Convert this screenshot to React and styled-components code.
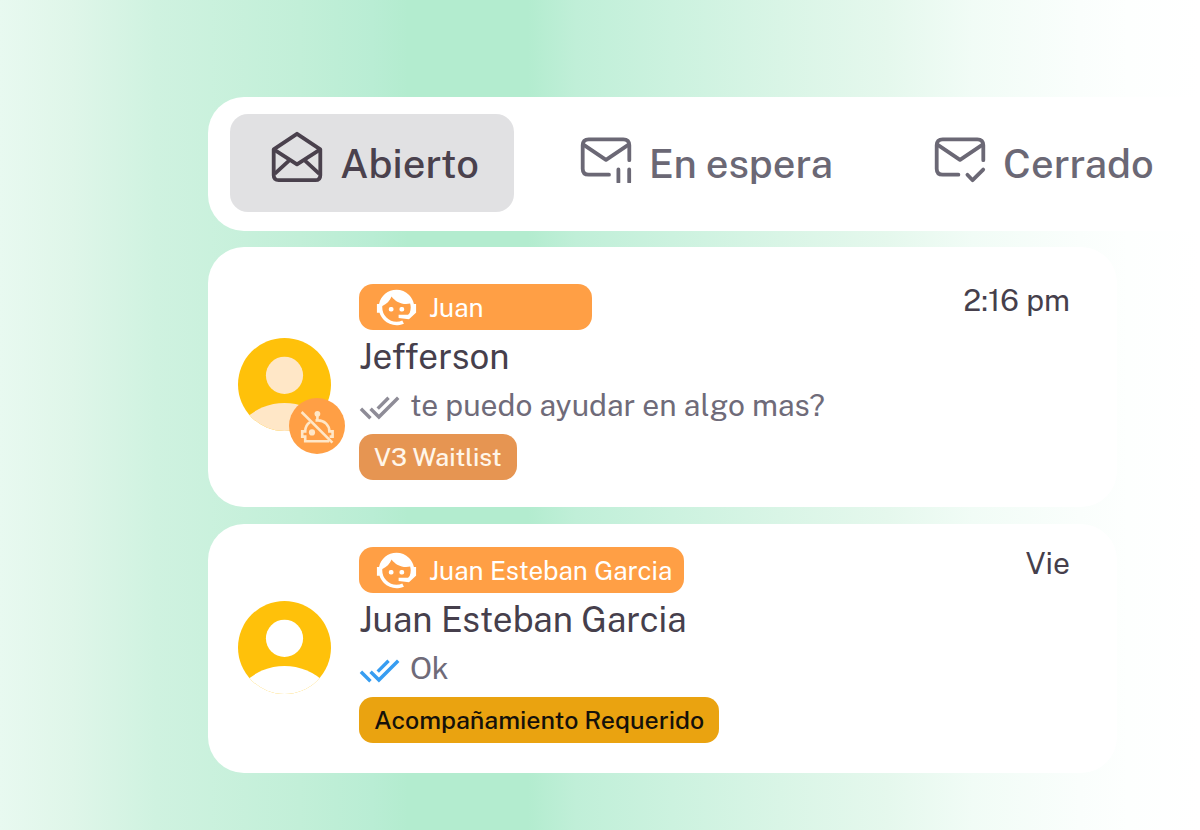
import React from "react";
import styled, { createGlobalStyle } from "styled-components";
import { MdDoneAll } from "react-icons/md";

const GlobalStyle = createGlobalStyle`
  * {
    box-sizing: border-box;
  }
  body {
    margin: 0;
    font-family: "Public Sans", Inter, "Liberation Sans", sans-serif;
    color: #463f4c;
  }
`;

const Page = styled.div`
  min-height: 100vh;
  padding: 97px 83px 56px 208px;
  overflow: hidden;
  background: linear-gradient(
    90deg,
    #e8f9f0 0%,
    #dff6e9 6%,
    #cff2e0 13%,
    #c2efd8 25%,
    #b9edd4 31%,
    #b3eccf 34%,
    #b3eccf 44%,
    #c0efd8 48%,
    #ccf2df 56%,
    #d9f5e6 65%,
    #e5f8ed 74%,
    #f1fcf6 81%,
    #fafefc 90%,
    #fdfffe 94%,
    #ffffff 100%
  );
`;

const TabBar = styled.nav`
  display: flex;
  gap: 25px;
  margin-right: -83px;
  margin-bottom: 16px;
  padding: 17px 22px 19px;
  border-radius: 36px 0 0 36px;
  background: #fff;
`;

const Tab = styled.button`
  display: flex;
  flex-shrink: 0;
  align-items: center;
  gap: 17px;
  height: 98px;
  padding: 0 35px 0 41px;
  border: 0;
  border-radius: 18px;
  background: ${(props) => (props.$active ? "#e1e1e3" : "transparent")};
  color: ${(props) => (props.$active ? "#4a414d" : "#6b6875")};
  font-family: inherit;
  font-size: 40px;
  font-weight: 500;
  white-space: nowrap;
  cursor: pointer;
  svg {
    margin-bottom: 12px;
  }
`;

const List = styled.main`
  display: flex;
  flex-direction: column;
  gap: 17px;
`;

const Card = styled.article`
  display: flex;
  align-items: center;
  gap: 28px;
  padding: ${(props) => (props.$tall ? "37px 47px 27px 30px" : "23px 47px 30px 30px")};
  border-radius: 36px;
  background: #fff;
`;

const AvatarBox = styled.div`
  position: relative;
  flex-shrink: 0;
  width: 93px;
  height: 93px;
  margin-top: 4px;
`;

const Badge = styled.span`
  position: absolute;
  top: 60px;
  left: 51px;
  width: 56px;
  height: 56px;
  border-radius: 50%;
  background: #ff9f45;
`;

const Content = styled.div`
  flex: 1;
  display: flex;
  flex-direction: column;
  align-items: flex-start;
`;

const Agent = styled.div`
  display: flex;
  align-items: center;
  gap: 9px;
  min-width: 233px;
  height: 46px;
  padding: 0 12px 0 14px;
  border-radius: 14px;
  background: #ff9f45;
  color: #fff;
  font-size: 26px;
`;

const Name = styled.h2`
  margin: 0;
  font-size: 35px;
  font-weight: 400;
  line-height: 53px;
`;

const Message = styled.p`
  display: flex;
  align-items: center;
  gap: 10px;
  margin: 0;
  padding-bottom: 6px;
  color: #6f6b79;
  font-size: 30px;
  line-height: 45px;
  svg {
    margin-top: 4px;
    color: ${(props) => (props.$read ? "#379df1" : "#8e8c97")};
  }
`;

const Tag = styled.span`
  height: 46px;
  padding: 0 15px;
  border-radius: 14px;
  background: ${(props) => props.$bg};
  color: ${(props) => props.$color};
  font-size: 25px;
  font-weight: 500;
  line-height: 46px;
`;

const Time = styled.time`
  align-self: flex-start;
  font-size: 30px;
  line-height: 32px;
`;

const OpenMailIcon = () => (
  <svg
    width="52"
    height="52"
    viewBox="0 0 52 52"
    fill="none"
    stroke="currentColor"
    strokeWidth="3.8"
    strokeLinejoin="round"
    aria-hidden="true"
  >
    <path d="M2.7 18.3L26 2.8L49.3 18.3V44.2Q49.3 49.2 44.3 49.2H7.7Q2.7 49.2 2.7 44.2Z" />
    <path d="M2.7 18.3L26 33.4L49.3 18.3M3.6 42.8L18.3 29.4M48.4 42.8L33.7 29.4" />
  </svg>
);

const MailIcon = ({ end, children }) => (
  <svg
    width="52"
    height="52"
    viewBox="0 0 52 52"
    fill="none"
    stroke="currentColor"
    strokeWidth="3.8"
    strokeLinecap="round"
    strokeLinejoin="round"
    aria-hidden="true"
  >
    <path
      d={`M49.3 29.2V14.3Q49.3 8.3 43.3 8.3H8.7Q2.7 8.3 2.7 14.3V37.7Q2.7 43.7 8.7 43.7H${end}`}
    />
    <path d="M3.4 13.6L26 28.8L48.6 13.6" />
    {children}
  </svg>
);

const AgentIcon = () => (
  <svg width="47" height="47" viewBox="0 0 24 24" fill="currentColor" aria-hidden="true">
    <path d="M18.72 14.76C19.07 13.91 19.26 13 19.26 12C19.26 11.28 19.15 10.59 18.96 9.95C18.31 10.1 17.63 10.18 16.92 10.18C13.86 10.18 11.15 8.67 9.5 6.34C8.61 8.5 6.91 10.26 4.77 11.22C4.73 11.47 4.73 11.74 4.73 12A7.27 7.27 0 0 0 12 19.27C13.05 19.27 14.06 19.04 14.97 18.63C15.54 19.72 15.8 20.26 15.78 20.26C14.14 20.81 12.87 21.08 12 21.08C9.58 21.08 7.27 20.13 5.57 18.42C4.53 17.38 3.76 16.11 3.33 14.73H2V10.18H3.09C3.93 6.04 7.6 2.92 12 2.92C14.4 2.92 16.71 3.87 18.42 5.58C19.69 6.84 20.54 8.45 20.89 10.18H22V14.73H21.94L18.38 18L13.08 17.4V15.73H17.91L18.72 14.76M9.27 11.77A1.14 1.14 0 1 1 9.27 14.04A1.14 1.14 0 1 1 9.27 11.77M14.72 11.77A1.14 1.14 0 1 1 14.72 14.04A1.14 1.14 0 1 1 14.72 11.77Z" />
  </svg>
);

const BotOffIcon = () => (
  <svg
    width="56"
    height="56"
    viewBox="0 0 56 56"
    fill="none"
    stroke="#ffe7c7"
    strokeWidth="2.6"
    aria-hidden="true"
  >
    <circle cx="28.4" cy="15.8" r="2.9" fill="#ffe7c7" stroke="none" />
    <path d="M28.4 16V22.4M26.5 22.4H29C35.5 22.4 40.4 27.3 40.4 33.4H43.6V38.6H40.6" />
    <path d="M21 24.2C18 26.2 16.2 29.4 16.2 33.4H13.2V38.6H16.2V43.2H40.2" />
    <circle cx="23" cy="34.4" r="3.1" fill="#ffe7c7" stroke="none" />
    <path d="M12.6 14L43.4 44.6" />
  </svg>
);

const Avatar = ({ color, botOff }) => (
  <AvatarBox>
    <svg width="93" height="93" viewBox="0 0 93 93" aria-hidden="true">
      <clipPath id={`clip-${botOff ? "off" : "on"}`}>
        <circle cx="46.5" cy="46.5" r="46.5" />
      </clipPath>
      <g clipPath={`url(#clip-${botOff ? "off" : "on"})`}>
        <rect width="93" height="93" fill="#ffc10a" />
        <circle cx="46.5" cy="37.3" r="18.6" fill={color} />
        <circle cx="46.5" cy="122" r="57" fill={color} />
      </g>
    </svg>
    {botOff && (
      <Badge>
        <BotOffIcon />
      </Badge>
    )}
  </AvatarBox>
);

const chats = [
  {
    agent: "Juan",
    name: "Jefferson",
    message: "te puedo ayudar en algo mas?",
    tag: "V3 Waitlist",
    tagBg: "#e69552",
    tagColor: "#fff6e9",
    time: "2:16 pm",
    avatar: "#ffe7c7",
    botOff: true,
    read: false,
  },
  {
    agent: "Juan Esteban Garcia",
    name: "Juan Esteban Garcia",
    message: "Ok",
    tag: "Acompañamiento Requerido",
    tagBg: "#eaa310",
    tagColor: "#15110a",
    time: "Vie",
    avatar: "#ffffff",
    botOff: false,
    read: true,
  },
];

const App = () => {
  return (
    <>
      <GlobalStyle />
      <Page>
        <TabBar>
          <Tab type="button" $active>
            <OpenMailIcon />
            Abierto
          </Tab>
          <Tab type="button">
            <MailIcon end="29">
              <path d="M38.4 38.4V51M49.2 38.4V51" />
            </MailIcon>
            En espera
          </Tab>
          <Tab type="button">
            <MailIcon end="24.4">
              <path d="M33.4 43.8L38.6 49.2L49.2 38.6" />
            </MailIcon>
            Cerrado
          </Tab>
        </TabBar>
        <List>
          {chats.map((chat) => (
            <Card key={chat.name} $tall={chat.botOff}>
              <Avatar color={chat.avatar} botOff={chat.botOff} />
              <Content>
                <Agent>
                  <AgentIcon />
                  {chat.agent}
                </Agent>
                <Name>{chat.name}</Name>
                <Message $read={chat.read}>
                  <MdDoneAll size={41} />
                  {chat.message}
                </Message>
                <Tag $bg={chat.tagBg} $color={chat.tagColor}>
                  {chat.tag}
                </Tag>
              </Content>
              <Time>{chat.time}</Time>
            </Card>
          ))}
        </List>
      </Page>
    </>
  );
};

export default App;
